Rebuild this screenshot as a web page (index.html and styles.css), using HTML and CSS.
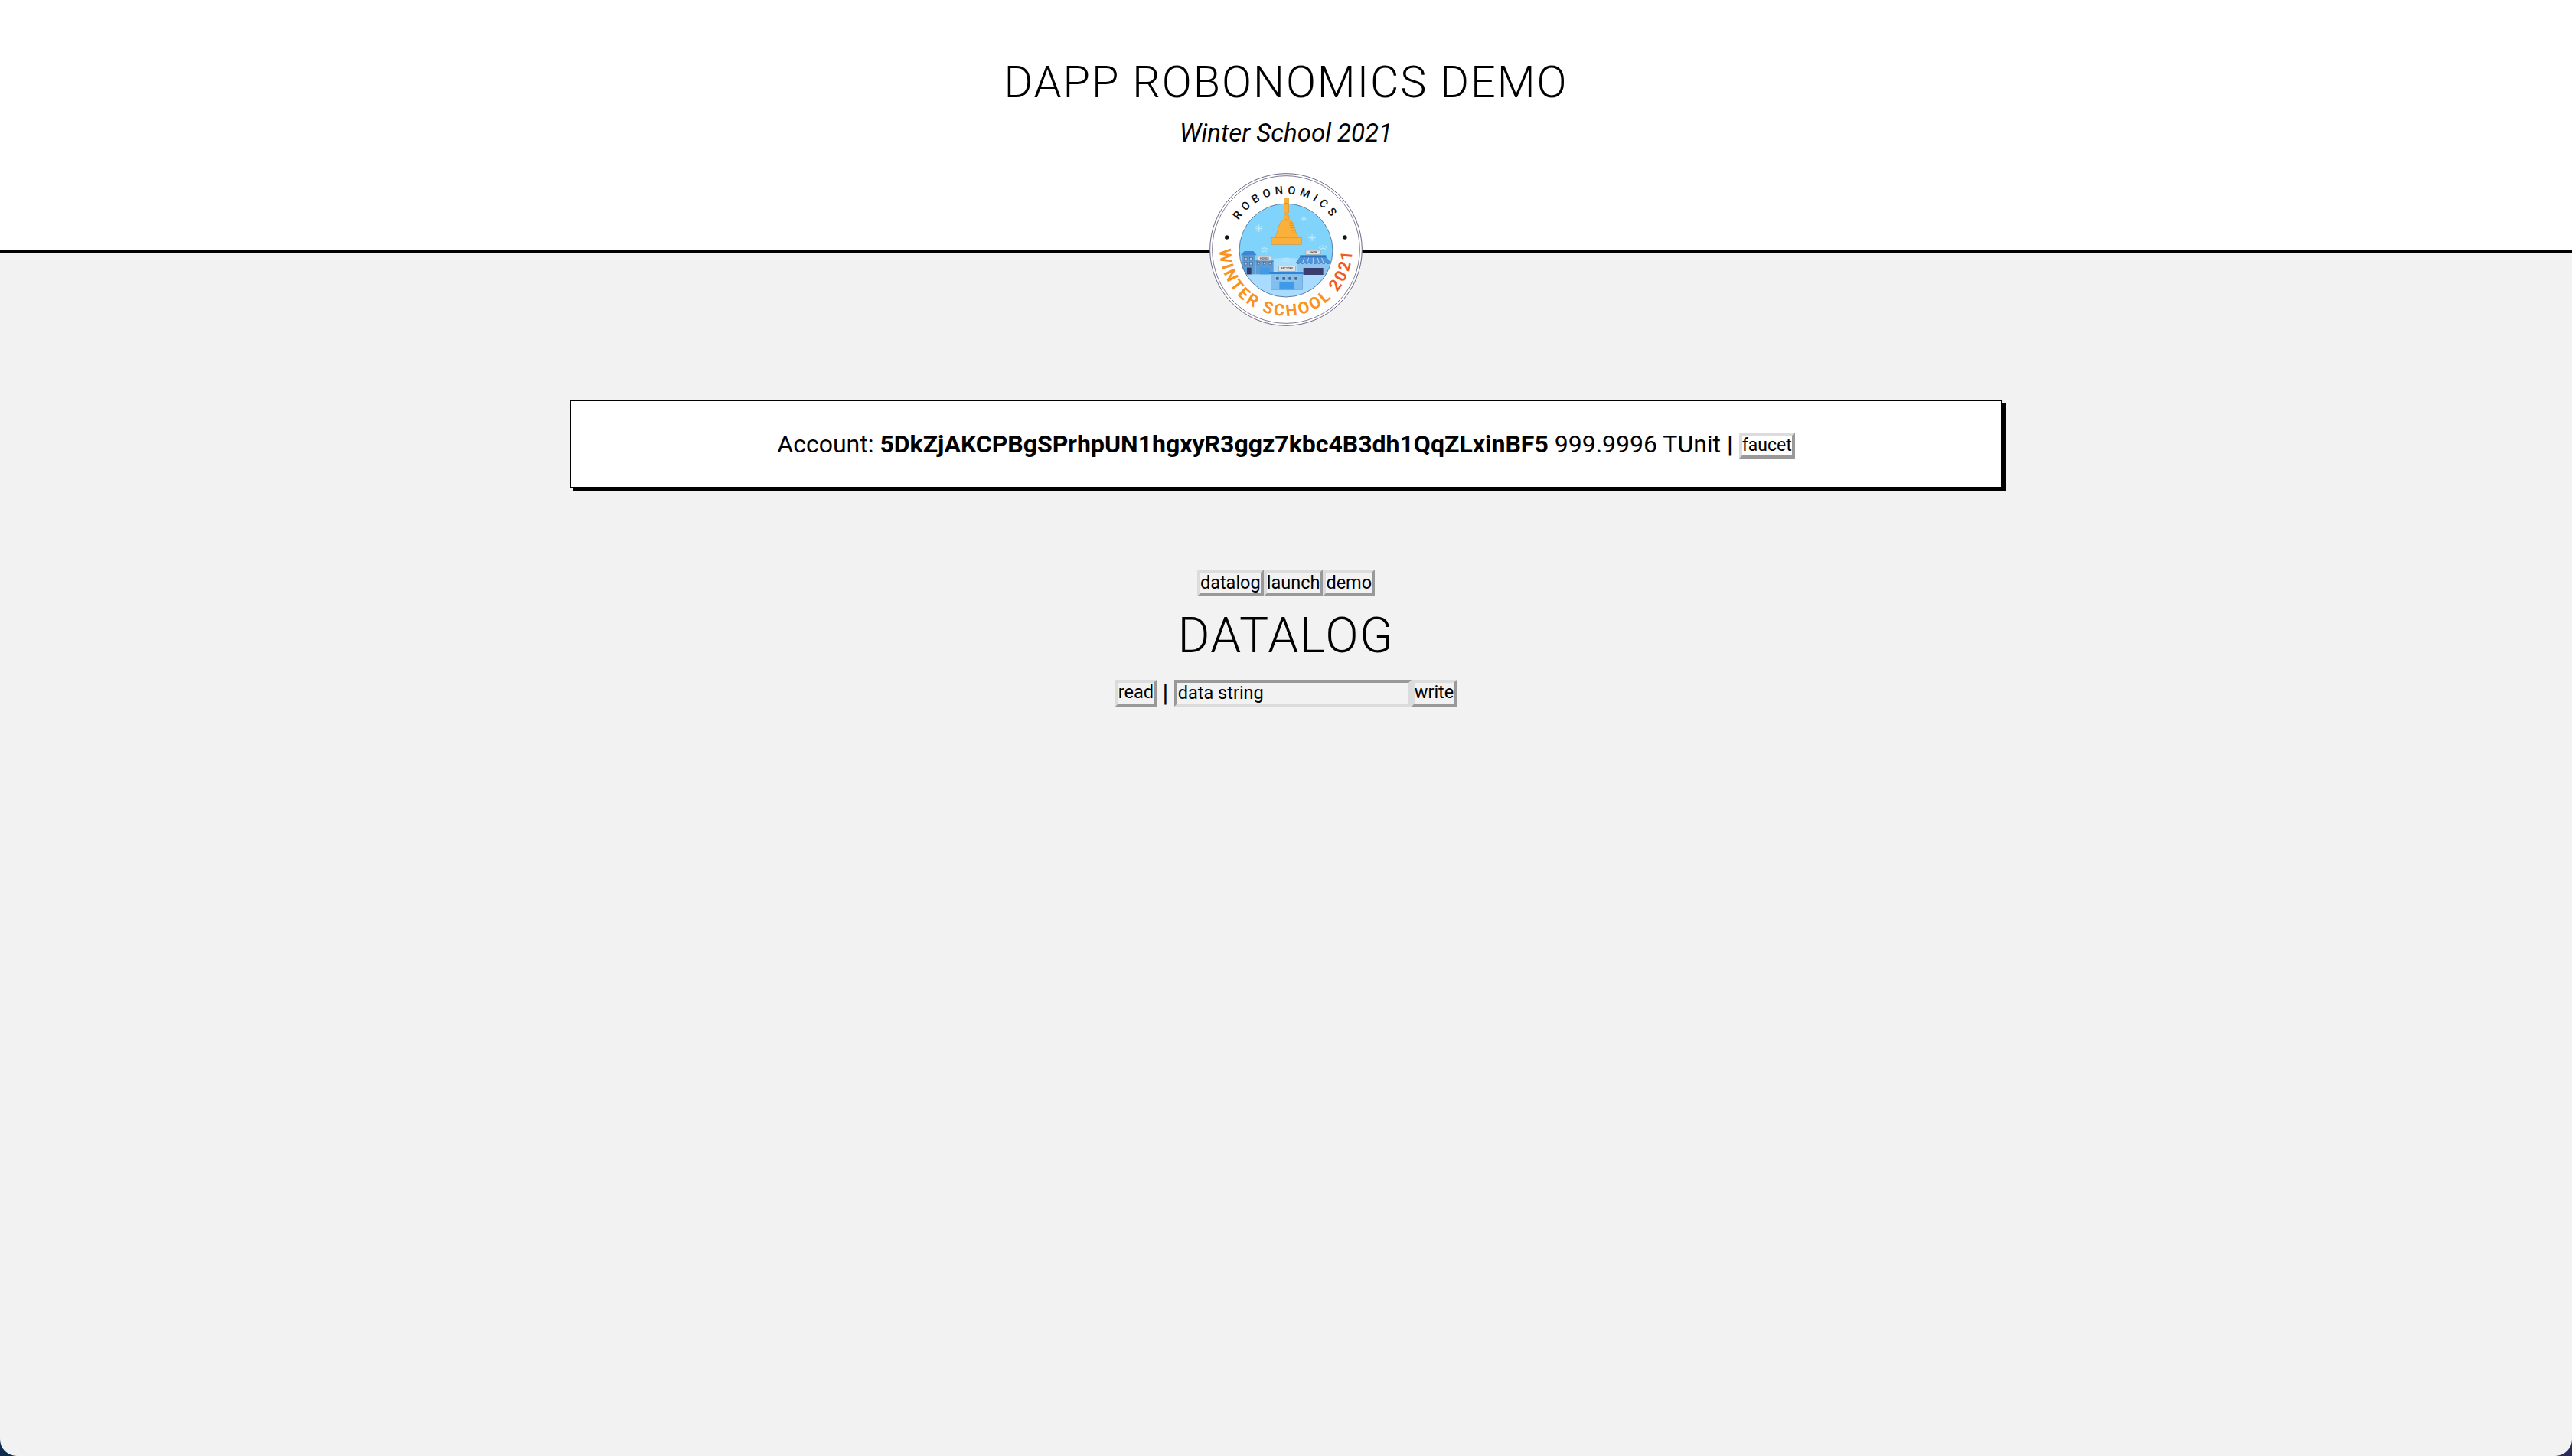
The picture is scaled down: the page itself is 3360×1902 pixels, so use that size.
FILE: index.html
```html
<!DOCTYPE html>
<html lang="en">
<head>
<meta charset="utf-8">
<title>DAPP ROBONOMICS DEMO</title>
<link rel="stylesheet" href="styles.css">
</head>
<body>
<div class="page">
  <header class="header">
    <h1 class="title">DAPP ROBONOMICS DEMO</h1>
    <p class="subtitle">Winter School 2021</p>
    <svg class="logo" viewBox="60 33 600 600" xmlns="http://www.w3.org/2000/svg" role="img" aria-label="Robonomics Winter School 2021">
      <defs>
        <clipPath id="inner"><circle cx="360" cy="336" r="183"/></clipPath>
        <path id="arcTop" d="M 142 333 A 218 218 0 0 1 578 333"/>
        <path id="arcBottom" d="M 100 333 A 260 260 0 0 0 620 333"/>
      </defs>
      <circle cx="360" cy="333" r="298" fill="#fff" stroke="#6a6785" stroke-width="3"/>
      <circle cx="360" cy="333" r="289" fill="none" stroke="#7d7a95" stroke-width="3"/>
      <circle cx="128" cy="285" r="8" fill="#111"/>
      <circle cx="591" cy="285" r="8" fill="#111"/>
      <text class="logo-top"><textPath href="#arcTop" startOffset="50%" text-anchor="middle">ROBONOMICS</textPath></text>
      <text class="logo-bottom"><textPath href="#arcBottom" startOffset="50%" text-anchor="middle">WINTER SCHOOL <tspan class="logo-year">2021</tspan></textPath></text>
      <circle cx="360" cy="336" r="183" fill="#80d4fb"/>
      <g clip-path="url(#inner)">
        <ellipse cx="360" cy="420" rx="130" ry="55" fill="#a5defc"/>
        <rect x="170" y="430" width="380" height="100" fill="#a8dbfd"/>
        <g fill="none" stroke="#b6e6fc" stroke-width="4">
          <path d="M262 335a16 16 0 0 1 28 0M268 343a9 9 0 0 1 16 0"/>
          <path d="M346 378a16 16 0 0 1 30 0M352 386a9 9 0 0 1 18 0"/>
          <path d="M490 328a16 16 0 0 1 30 0M496 336a9 9 0 0 1 18 0"/>
        </g>
        <rect x="189" y="352" width="50" height="78" fill="#5d9bd2"/>
        <path d="M182 355 L197 339 H232 L245 355 Z" fill="#3d86d6"/>
        <rect x="241" y="378" width="70" height="52" fill="#5d9bd2"/>
        <rect x="241" y="376" width="70" height="3" fill="#3d6fa8"/>
        <rect x="259" y="404" width="36" height="26" fill="#3f9be8"/>
        <rect x="207" y="404" width="17" height="26" fill="#343a66"/>
        <g fill="#a9cdea" stroke="#33507f" stroke-width="1.5">
          <rect x="196" y="364" width="11" height="11"/><rect x="218" y="364" width="11" height="11"/>
          <rect x="196" y="382" width="11" height="11"/><rect x="218" y="382" width="11" height="11"/>
          <rect x="247" y="382" width="10" height="10"/><rect x="271" y="382" width="10" height="10"/><rect x="294" y="382" width="10" height="10"/>
        </g>
        <rect x="250" y="360" width="52" height="17" fill="#dfe3e6" stroke="#8a93a0" stroke-width="1.5"/>
        <rect x="405" y="388" width="122" height="44" fill="#8fc4ec"/>
        <rect x="428" y="405" width="78" height="27" fill="#3b3d6e"/>
        <rect x="415" y="355" width="102" height="10" fill="#2f78c8"/>
        <path d="M415 363 H517 L534 384 Q525 394 516 384 Q508 394 499 384 Q491 394 482 384 Q475 394 466 384 Q458 394 449 384 Q442 394 433 384 Q425 394 416 384 Q408 394 400 384 Z" fill="#4d93d8" stroke="#2f5f9c" stroke-width="1.5"/>
        <path d="M432 365 L425 386M449 365 L442 386M466 365 V386M483 365 L490 386M500 365 L507 386" stroke="#d6e8f7" stroke-width="2.5" fill="none"/>
        <rect x="438" y="336" width="58" height="17" fill="#dfe3e6" stroke="#8a93a0" stroke-width="1.5"/>
        <rect x="301" y="428" width="124" height="62" fill="#83bfee" stroke="#5e93bd" stroke-width="1.5"/>
        <rect x="295" y="420" width="136" height="9" fill="#2f86d4"/>
        <rect x="331" y="398" width="66" height="20" fill="#dfe3e6" stroke="#8a93a0" stroke-width="1.5"/>
        <rect x="334" y="461" width="56" height="29" fill="#3f9be8"/>
        <g fill="#3d6c9c" stroke="#b5d8f2" stroke-width="1.5">
          <rect x="320" y="440" width="13" height="13"/><rect x="345" y="440" width="13" height="13"/><rect x="369" y="440" width="13" height="13"/><rect x="393" y="440" width="13" height="13"/>
        </g>
        <g class="logo-sign">
          <text x="276" y="372">HOUSE</text>
          <text x="467" y="348">SHOP</text>
          <text x="364" y="412">FACTORY</text>
        </g>
      </g>
      <g fill="none" stroke="#c6effe" stroke-width="2.5" stroke-linecap="round">
        <path d="M254 236v28M240 250h28M244 240l20 20M264 240l-20 20"/>
        <path d="M462 273v28M448 287h28M452 277l20 20M472 277l-20 20"/>
        <path d="M430 204v18M421 213h18M424 207l12 12M436 207l-12 12"/>
      </g>
      <g fill="#fbb03b" stroke="#d98a1e" stroke-width="1.5">
        <rect x="352" y="131" width="19" height="58"/>
        <circle cx="362" cy="207" r="11"/>
        <path d="M342 222 Q362 208 382 222 C394 232 394 262 408 286 H316 C330 262 330 232 342 222 Z"/>
        <rect x="303" y="286" width="118" height="27"/>
      </g>
      <path d="M372 228h14M374 238h16M376 248h16M378 258h18M380 268h18" stroke="#b8791f" stroke-width="1.5" fill="none"/>
      <circle cx="360" cy="336" r="183" fill="none" stroke="#3c4a78" stroke-width="2"/>
    </svg>
  </header>
  <main class="main">
    <section class="account">
      <span>Account: <b class="address">5DkZjAKCPBgSPrhpUN1hgxyR3ggz7kbc4B3dh1QqZLxinBF5</b> 999.9996 TUnit | </span><button class="btn btn-faucet" type="button">faucet</button>
    </section>
    <nav class="tabs">
      <button class="btn" type="button">datalog</button><button class="btn" type="button">launch</button><button class="btn" type="button">demo</button>
    </nav>
    <h2 class="section-title">DATALOG</h2>
    <div class="controls">
      <button class="btn" type="button">read</button>
      <span class="sep">|</span>
      <input class="field" type="text" value="data string"><button class="btn" type="button">write</button>
    </div>
  </main>
</div>
</body>
</html>
```

FILE: styles.css
```css
* { box-sizing: border-box; }
html {
  height: 100%;
  background: linear-gradient(90deg, #0c2d4e, #2b2a5c);
}
body {
  margin: 0;
  height: 100%;
  font-family: Roboto, "Liberation Sans", sans-serif;
  font-weight: 400;
  color: #000;
}
.page {
  height: 1902px;
  overflow: hidden;
  background: #f2f2f2;
  border-radius: 0 0 22px 22px;
}
.header {
  position: relative;
  height: 330px;
  padding-top: 74px;
  background: #fff;
  border-bottom: 4px solid #000;
  text-align: center;
}
.title {
  margin: 0;
  font-size: 57.6px;
  line-height: 68px;
  font-weight: 300;
  letter-spacing: 1.95px;
}
.subtitle {
  margin: 13px 0 0;
  font-size: 33px;
  line-height: 38px;
  font-style: italic;
}
.logo {
  position: absolute;
  left: 1580px;
  top: 226px;
  width: 200px;
  height: 200px;
}
.logo-top {
  font-family: Roboto, sans-serif;
  font-size: 44px;
  font-weight: 500;
  letter-spacing: 16px;
  fill: #111;
}
.logo-bottom {
  font-family: Roboto, sans-serif;
  font-size: 64px;
  font-weight: 700;
  letter-spacing: 8.5px;
  fill: #f7931e;
}
.logo-year { fill: #f15a24; }
.logo-sign {
  font-family: Roboto, sans-serif;
  font-size: 11px;
  font-weight: 500;
  text-anchor: middle;
  fill: #333;
}
.main {
  display: flex;
  flex-direction: column;
  align-items: center;
}
.account {
  width: 1872px;
  height: 116px;
  margin-top: 192px;
  display: flex;
  align-items: center;
  justify-content: center;
  background: #fff;
  border: 2px solid #000;
  box-shadow: 4px 4px 0 #000;
  font-size: 32px;
  white-space: pre;
}
.address { font-weight: 700; }
.btn {
  height: 35px;
  margin: 0;
  padding: 0;
  background: transparent;
  border: 4px solid;
  border-color: #dcdcdc #999 #999 #dcdcdc;
  border-radius: 0;
  font-family: Roboto, sans-serif;
  font-size: 23.5px;
  font-weight: 400;
  line-height: 1;
  color: #000;
}
.btn-faucet {
  height: 34px;
  margin-top: 3px;
  font-size: 23px;
}
.tabs {
  display: flex;
  margin-top: 106px;
}
.section-title {
  margin: 14px 0 0;
  font-size: 64px;
  line-height: 75px;
  font-weight: 300;
  letter-spacing: 1.6px;
}
.controls {
  display: flex;
  align-items: center;
  margin-top: 18px;
  font-size: 32px;
}
.sep { margin: 0 7.5px; }
.field {
  width: 310px;
  height: 35px;
  padding: 0 1px;
  background: transparent;
  border: 4px solid;
  border-color: #999 #dcdcdc #dcdcdc #999;
  border-radius: 0;
  font-family: Roboto, sans-serif;
  font-size: 23.5px;
  color: #000;
}
```
